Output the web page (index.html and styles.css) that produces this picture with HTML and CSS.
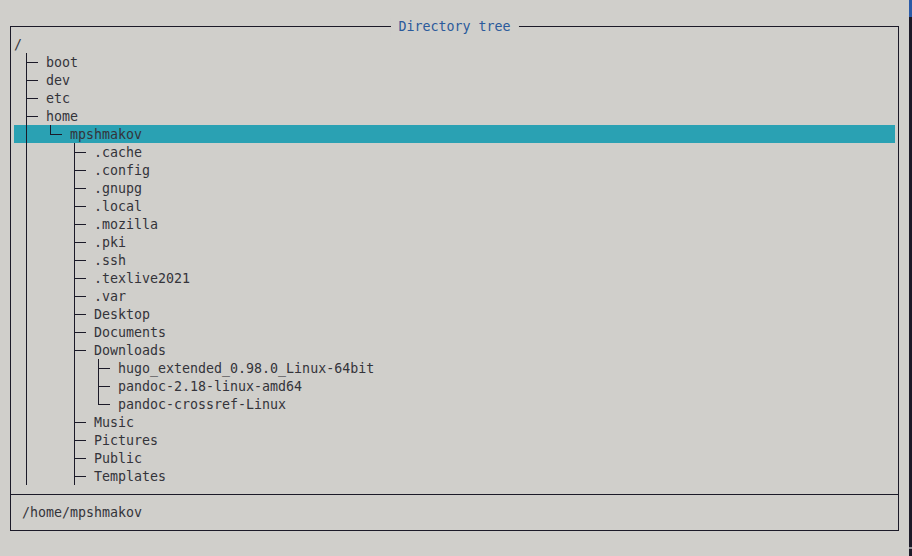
FILE: index.html
```html
<!DOCTYPE html>
<html lang="en">
<head>
<meta charset="utf-8">
<title>Directory tree</title>
<link rel="stylesheet" href="styles.css">
</head>
<body>
<div class="screen">
  <div class="main">
    <section class="frame">
      <h1 class="frame-title">Directory tree</h1>
      <div class="tree">
        <div class="label root">/</div>
        <ul>
          <li><div class="label">boot</div></li>
          <li><div class="label">dev</div></li>
          <li><div class="label">etc</div></li>
          <li><div class="label">home</div>
            <ul>
              <li><div class="label selected">mpshmakov</div>
                <ul>
                  <li><div class="label">.cache</div></li>
                  <li><div class="label">.config</div></li>
                  <li><div class="label">.gnupg</div></li>
                  <li><div class="label">.local</div></li>
                  <li><div class="label">.mozilla</div></li>
                  <li><div class="label">.pki</div></li>
                  <li><div class="label">.ssh</div></li>
                  <li><div class="label">.texlive2021</div></li>
                  <li><div class="label">.var</div></li>
                  <li><div class="label">Desktop</div></li>
                  <li><div class="label">Documents</div></li>
                  <li><div class="label">Downloads</div>
                    <ul>
                      <li><div class="label">hugo_extended_0.98.0_Linux-64bit</div></li>
                      <li><div class="label">pandoc-2.18-linux-amd64</div></li>
                      <li><div class="label">pandoc-crossref-Linux</div></li>
                    </ul>
                  </li>
                  <li><div class="label">Music</div></li>
                  <li><div class="label">Pictures</div></li>
                  <li><div class="label">Public</div></li>
                  <li><div class="label">Templates</div></li>
                  <li class="offscreen"></li>
                </ul>
              </li>
            </ul>
          </li>
          <li class="offscreen"></li>
        </ul>
      </div>
      <div class="status">/home/mpshmakov</div>
    </section>
  </div>
  <div class="scrollbar"></div>
</div>
</body>
</html>
```
FILE: styles.css
```css
html, body {
  margin: 0;
  padding: 0;
}

body {
  background: #d0cfcb;
  color: #34343a;
  font-family: "DejaVu Sans Mono", "Liberation Mono", monospace;
  font-size: 13.3px;
  line-height: 18px;
}

.screen {
  display: flex;
  height: 556px;
  overflow: hidden;
}

.main {
  flex: 1;
  padding-top: 26px;
}

.frame {
  position: relative;
  margin: 0 10px;
  border: 1px solid #1b1a28;
  box-sizing: border-box;
  height: 505px;
  display: flex;
  flex-direction: column;
}

.frame-title {
  position: absolute;
  top: -9px;
  left: 50%;
  transform: translateX(-50%);
  margin: 0;
  padding: 0 8px;
  background: #d0cfcb;
  color: #2b5a9b;
  font: inherit;
  line-height: 18px;
  white-space: pre;
}

.tree {
  position: relative;
  isolation: isolate;
  height: 450px;
  padding: 8px 3px 9px 3px;
  overflow: hidden;
  border-bottom: 1px solid #1b1a28;
}

.tree ul {
  list-style: none;
  margin: 0;
  padding: 0;
}

.tree > ul {
  margin-left: 8px;
}

.tree li {
  position: relative;
  padding-left: 24px;
}

.tree li::before {
  content: "";
  position: absolute;
  left: 4px;
  top: 0;
  bottom: 0;
  width: 1px;
  background: #1b1a28;
}

.tree li:last-child::before {
  bottom: auto;
  height: 10px;
}

.tree li::after {
  content: "";
  position: absolute;
  left: 4px;
  top: 9px;
  width: 12px;
  height: 1px;
  background: #1b1a28;
}

/* siblings that lie below the visible area */
.tree li.offscreen {
  height: 0;
}

.tree li.offscreen::before,
.tree li.offscreen::after {
  display: none;
}

.label {
  position: relative;
  box-sizing: border-box;
  height: 18px;
  padding-top: 1px;
  white-space: pre;
}

.label.selected::before {
  content: "";
  position: absolute;
  z-index: -1;
  left: -56px;
  right: 0;
  top: 0;
  height: 18px;
  background: #2aa1b3;
}

.status {
  padding: 9px 11px 8px;
  height: 18px;
  white-space: pre;
}

.scrollbar {
  width: 3px;
  background: linear-gradient(#2a5aa6 0, #2a5aa6 17px, #1b1a28 17px, #1b1a28 547px, #8d8c92 547px, #8d8c92 549px, #1b1a28 549px);
}
```
